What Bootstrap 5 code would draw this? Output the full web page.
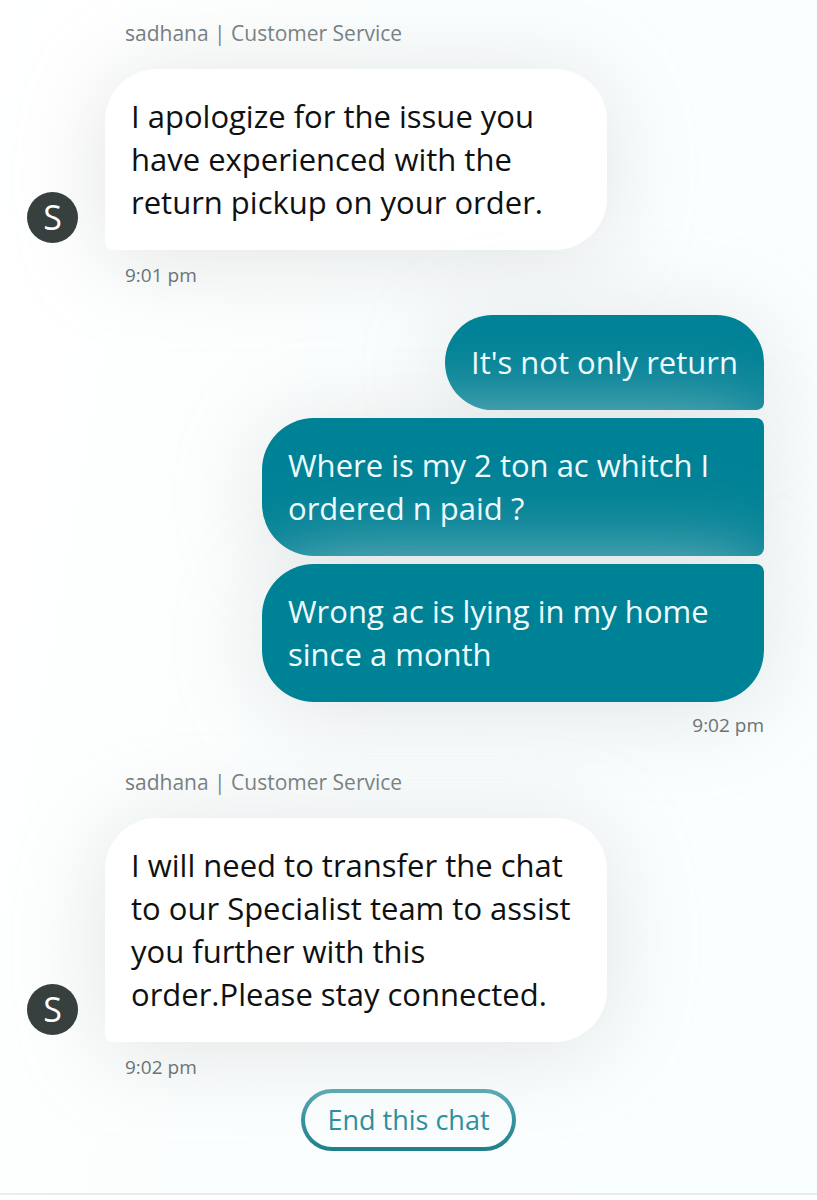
<!DOCTYPE html>
<html lang="en">
<head>
<meta charset="utf-8">
<meta name="viewport" content="width=device-width, initial-scale=1">
<title>Customer Service chat</title>
<link href="https://cdn.jsdelivr.net/npm/bootstrap@5.3.0/dist/css/bootstrap.min.css" rel="stylesheet">
<style>
  body { font-family: "Open Sans", "Noto Sans", sans-serif; background: #fff; color: #0f1111; }
  .chat-page { background: linear-gradient(100deg, #ffffff 0%, #fbfefe 45%, #f9feff 100%); padding: 18px 53px 42px 27px; border-bottom: 2px solid #e9eded; overflow: hidden; }
  .sender { font-size: 21px; line-height: 30px; color: #6a7475; margin-left: 98px; margin-bottom: 21px; }
  .avatar { width: 51px; height: 51px; margin-bottom: 7px; background: #373f3f; font-size: 34px; line-height: 51px; font-weight: 500; z-index: 2; }
  .agent-row { gap: 27px; }
  .bubble { max-width: 502px; padding: 26px; font-size: 31px; line-height: 43px; box-shadow: 0 8px 90px rgba(220, 223, 223, .8); }
  .agent { background: #fff; border-radius: 52px 52px 52px 8px; }
  .mine { background: #008296; color: #effcff; border-radius: 52px 8px 8px 52px; }
  .mine:first-child { border-top-right-radius: 52px; }
  .mine:last-child { border-bottom-right-radius: 52px; }
  .stamp { font-size: 19px; line-height: 26px; color: #6a7475; z-index: 2; }
  .agent-stamp { margin: 12px 0 0 98px; }
  .my-stack { gap: 8px; margin-top: 27px; }
  .my-stamp { margin: 10px 0 29px; }
  .end-row { margin: 9px -26px 0 0; }
  .btn-end { font-size: 27px; line-height: 38px; color: #2f8f9c; padding: 8px 22px; border: 4px solid transparent; border-radius: 31px;
    background: linear-gradient(#f7fafa, #fafefe) padding-box, linear-gradient(#5fabb4, #3a95a1 45%, #1e808b) border-box; }
  .btn-end:hover { color: #1e808b; }
</style>
</head>
<body>
<main class="chat-page">
  <section>
    <div class="sender">sadhana | Customer Service</div>
    <div class="agent-row d-flex align-items-end">
      <div class="avatar rounded-circle text-white text-center flex-shrink-0 position-relative">S</div>
      <div class="bubble agent">I apologize for the issue you have experienced with the return pickup on your order.</div>
    </div>
    <div class="stamp agent-stamp position-relative">9:01 pm</div>
  </section>
  <section>
    <div class="my-stack d-flex flex-column align-items-end">
      <div class="bubble mine">It's not only return</div>
      <div class="bubble mine">Where is my 2 ton ac whitch I ordered n paid ?</div>
      <div class="bubble mine">Wrong ac is lying in my home since a month</div>
    </div>
    <div class="stamp my-stamp text-end position-relative">9:02 pm</div>
  </section>
  <section>
    <div class="sender">sadhana | Customer Service</div>
    <div class="agent-row d-flex align-items-end">
      <div class="avatar rounded-circle text-white text-center flex-shrink-0 position-relative">S</div>
      <div class="bubble agent">I will need to transfer the chat to our Specialist team to assist you further with this order.Please stay connected.</div>
    </div>
    <div class="stamp agent-stamp position-relative">9:02 pm</div>
  </section>
  <div class="end-row text-center">
    <button type="button" class="btn btn-end">End this chat</button>
  </div>
</main>
<script src="https://cdn.jsdelivr.net/npm/bootstrap@5.3.0/dist/js/bootstrap.bundle.min.js"></script>
</body>
</html>
